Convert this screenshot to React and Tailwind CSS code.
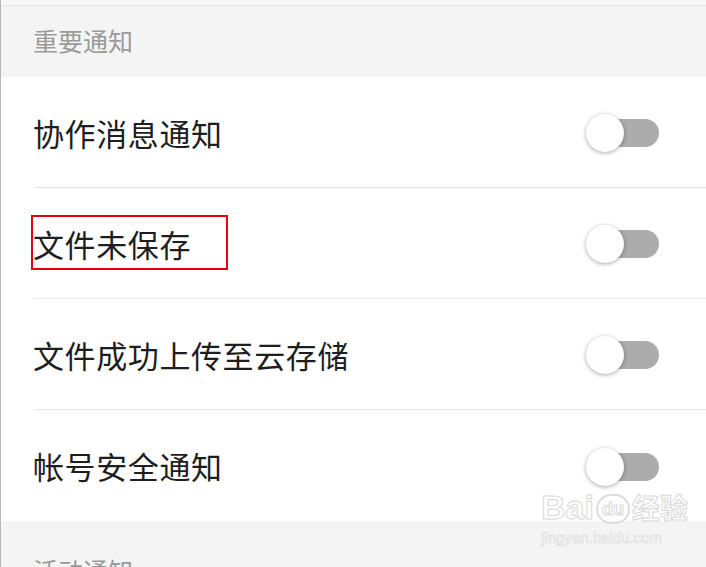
import React from "react";

const font = { fontFamily: '"Noto Sans CJK SC", "Noto Sans", sans-serif' };

function Toggle() {
  return (
    <div className="relative w-[78px] h-[42px] flex items-center">
      <div className="absolute left-[12px] top-[8px] w-[64px] h-[28px] rounded-full bg-[#acacac]" />
      <div className="absolute left-[3px] top-[3px] w-[38px] h-[38px] rounded-full bg-white shadow-[0_1px_4px_rgba(0,0,0,0.35)]" />
    </div>
  );
}

function Row({ label, boxed, last }) {
  return (
    <div className={"ml-[33px] h-[111px] flex items-center justify-between pr-[45px] " + (last ? "" : "border-b border-[#e6e6e6]")}>
      <span className="relative -ml-[1px] text-[31px] leading-none text-[#1e1e1e] tracking-[0.6px]">
        {label}
        {boxed && (
          <span className="absolute left-[-2px] top-[-13px] w-[197px] h-[55px] border-2 border-[#e60012]" />
        )}
      </span>
      <Toggle />
    </div>
  );
}

export default function App() {
  return (
    <div className="relative w-[706px] h-[567px] overflow-hidden bg-white border-l border-[#b8b8b8]" style={font}>
      <div className="h-[6px] bg-[#f8f8f8] border-b border-[#e4e4e4]" />
      <div className="h-[71px] bg-[#f4f4f4] pl-[32px] flex items-center">
        <span className="text-[25px] text-[#9a9a9a] leading-none -mt-[3px]">重要通知</span>
      </div>
      <Row label="协作消息通知" />
      <Row label="文件未保存" boxed />
      <Row label="文件成功上传至云存储" />
      <Row label="帐号安全通知" last />
      <div className="h-[50px] bg-[#f4f4f4] pl-[32px] pt-[37px]">
        <span className="text-[25px] text-[#9a9a9a] leading-none">活动通知</span>
      </div>
      <div className="absolute left-[540px] top-[490px] flex flex-col items-start pointer-events-none" style={{ fontFamily: '"Liberation Sans", "Noto Sans CJK SC", sans-serif' }}>
        <div className="flex items-end text-[34px] leading-none font-bold text-white" style={{ WebkitTextStroke: "1px #d8d8d8" }}>
          <span>Bai</span>
          <span className="w-[34px] h-[30px] rounded-full border-2 border-[#dcdcdc] text-[18px] flex items-center justify-center mx-[2px]">du</span>
          <span className="text-[28px]">经验</span>
        </div>
        <div className="text-[15px] leading-none mt-[6px] text-white" style={{ WebkitTextStroke: "0.6px #d8d8d8" }}>jingyan.baidu.com</div>
      </div>
    </div>
  );
}
